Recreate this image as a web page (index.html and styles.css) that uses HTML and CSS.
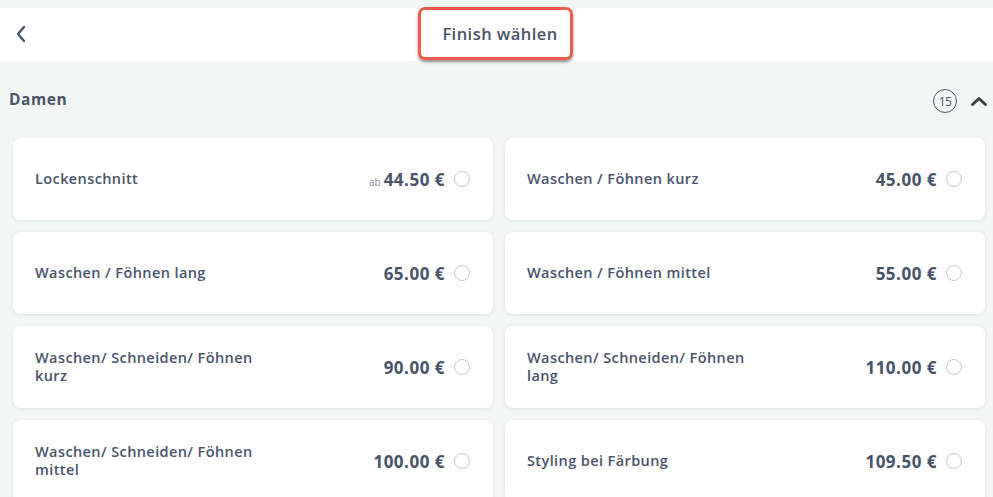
FILE: index.html
```html
<!DOCTYPE html>
<html lang="de">
<head>
<meta charset="utf-8">
<title>Finish wählen</title>
<link rel="stylesheet" href="styles.css">
</head>
<body>
<div class="topstrip"></div>
<header class="header">
  <button class="back" aria-label="Zurück">
    <svg width="12" height="18" viewBox="0 0 12 18"><path d="M9 2 L3 9 L9 16" fill="none" stroke="#4a5568" stroke-width="2.4" stroke-linecap="round" stroke-linejoin="round"/></svg>
  </button>
  <div class="title-box"><h1 class="title">Finish wählen</h1></div>
</header>
<section class="section">
  <div class="section-head">
    <h2 class="section-title">Damen</h2>
    <div class="section-tools">
      <span class="count">15</span>
      <svg class="chev" width="18" height="12" viewBox="0 0 18 12"><path d="M2.5 9.5 L9 3.5 L15.5 9.5" fill="none" stroke="#3a3d42" stroke-width="2.8" stroke-linecap="round" stroke-linejoin="round"/></svg>
    </div>
  </div>
  <div class="grid">
    <div class="card"><span class="name">Lockenschnitt</span><span class="price"><small class="ab">ab</small>44.50 €</span><span class="radio"></span></div>
    <div class="card"><span class="name">Waschen / Föhnen kurz</span><span class="price">45.00 €</span><span class="radio"></span></div>
    <div class="card"><span class="name">Waschen / Föhnen lang</span><span class="price">65.00 €</span><span class="radio"></span></div>
    <div class="card"><span class="name">Waschen / Föhnen mittel</span><span class="price">55.00 €</span><span class="radio"></span></div>
    <div class="card"><span class="name">Waschen/ Schneiden/ Föhnen kurz</span><span class="price">90.00 €</span><span class="radio"></span></div>
    <div class="card"><span class="name">Waschen/ Schneiden/ Föhnen lang</span><span class="price">110.00 €</span><span class="radio"></span></div>
    <div class="card"><span class="name">Waschen/ Schneiden/ Föhnen mittel</span><span class="price">100.00 €</span><span class="radio"></span></div>
    <div class="card"><span class="name">Styling bei Färbung</span><span class="price">109.50 €</span><span class="radio"></span></div>
  </div>
</section>
</body>
</html>
```
FILE: styles.css
```css
* { box-sizing: border-box; }
html, body { margin: 0; padding: 0; }
body {
  background: #f4f6f6;
  font-family: "Open Sans", "Liberation Sans", sans-serif;
  color: #48536a;
  overflow: hidden;
  height: 497px;
}
.topstrip { height: 8px; }
.header {
  height: 53px;
  background: #fff;
  display: flex;
  align-items: center;
  justify-content: center;
  position: relative;
}
.back {
  position: absolute;
  left: 15px;
  top: 17px;
  border: 0;
  background: none;
  padding: 0;
  display: flex;
}
.title-box {
  margin-top: -2px;
  margin-left: -2px;
  width: 155px;
  height: 53px;
  border: 3.5px solid #f05a4b;
  border-radius: 7px;
  box-shadow: 0 2px 3px rgba(0,0,0,0.45);
  display: flex;
  align-items: center;
  justify-content: center;
  padding-left: 9px;
}
.title {
  margin: 0;
  font-size: 16.5px;
  font-weight: 600;
  color: #48536a;
  letter-spacing: 0.45px;
}
.section-head {
  height: 77px;
  display: flex;
  align-items: center;
  padding: 0 5px 0 9px;
}
.section-title {
  margin: 0;
  font-size: 15.5px;
  font-weight: 700;
  color: #48536a;
  flex: 1;
  letter-spacing: 0.6px;
  margin-top: -2px;
}
.section-tools {
  display: flex;
  align-items: center;
  gap: 13px;
  margin-top: 3px;
}
.count {
  width: 24px;
  height: 24px;
  border: 1px solid #48536a;
  border-radius: 50%;
  font-size: 12px;
  letter-spacing: -0.5px;
  display: flex;
  align-items: center;
  justify-content: center;
  color: #48536a;
}
.grid {
  display: grid;
  grid-template-columns: 480px 480px;
  grid-auto-rows: 82px;
  column-gap: 12px;
  row-gap: 12px;
  padding-left: 13px;
}
.card {
  background: #fff;
  border-radius: 8px;
  box-shadow: 0 1px 4px rgba(60,70,80,0.12);
  display: flex;
  align-items: center;
  padding: 0 23px 0 22px;
}
.name {
  flex: 1;
  max-width: 235px;
  font-size: 14.5px;
  font-weight: 600;
  line-height: 18px;
  letter-spacing: 0.4px;
  margin-right: auto;
}
.price {
  margin-left: auto;
  font-size: 17px;
  font-weight: 700;
  letter-spacing: 0.5px;
  white-space: nowrap;
}
.ab {
  font-size: 10px;
  font-weight: 400;
  color: #8a93a6;
  letter-spacing: 0;
  margin-right: 3px;
}
.radio {
  width: 16px;
  height: 16px;
  border: 1.6px solid #c3c9d4;
  border-radius: 50%;
  margin-left: 9px;
}
```
